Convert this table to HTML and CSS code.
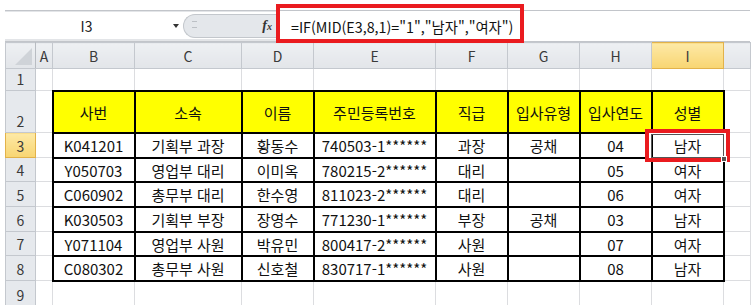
FILE: index.html
```html
<!DOCTYPE html>
<html lang="ko">
<head>
<meta charset="utf-8">
<title>Excel - MID 함수</title>
<link rel="stylesheet" href="styles.css">
</head>
<body>
<div class="app">
  <div class="fbar">
    <div class="namebox"><span class="name">I3</span><span class="dd"></span></div>
    <div class="pill"><span class="grip"></span><span class="fx">f<span class="fxx">x</span></span></div>
    <div class="formula">=IF(MID(E3,8,1)="1","남자","여자")</div>
  </div>
  <table class="sheet">
    <colgroup>
      <col class="c-rh"><col class="c-a"><col class="c-b"><col class="c-c"><col class="c-d"><col class="c-e"><col class="c-f"><col class="c-g"><col class="c-h"><col class="c-i"><col class="c-j">
    </colgroup>
    <tr class="r-hd">
      <th class="corner"><span class="tri"></span></th>
      <th class="ch">A</th><th class="ch">B</th><th class="ch">C</th><th class="ch">D</th><th class="ch">E</th><th class="ch">F</th><th class="ch">G</th><th class="ch">H</th><th class="ch ch-on">I</th><th class="ch"></th>
    </tr>
    <tr class="r-1">
      <th class="rh">1</th><td></td><td></td><td></td><td></td><td></td><td></td><td></td><td></td><td></td><td></td>
    </tr>
    <tr class="r-2">
      <th class="rh">2</th><td></td>
      <td class="t th-y">사번</td><td class="t th-y">소속</td><td class="t th-y">이름</td><td class="t th-y">주민등록번호</td><td class="t th-y">직급</td><td class="t th-y">입사유형</td><td class="t th-y">입사연도</td><td class="t th-y">성별</td><td></td>
    </tr>
    <tr class="r-d25">
      <th class="rh rh-on">3</th><td></td>
      <td class="t">K041201</td><td class="t">기획부 과장</td><td class="t">황동수</td><td class="t">740503-1******</td><td class="t">과장</td><td class="t">공채</td><td class="t">04</td><td class="t">남자</td><td></td>
    </tr>
    <tr class="r-d24">
      <th class="rh">4</th><td></td>
      <td class="t">Y050703</td><td class="t">영업부 대리</td><td class="t">이미옥</td><td class="t">780215-2******</td><td class="t">대리</td><td class="t"></td><td class="t">05</td><td class="t">여자</td><td></td>
    </tr>
    <tr class="r-d25">
      <th class="rh">5</th><td></td>
      <td class="t">C060902</td><td class="t">총무부 대리</td><td class="t">한수영</td><td class="t">811023-2******</td><td class="t">대리</td><td class="t"></td><td class="t">06</td><td class="t">여자</td><td></td>
    </tr>
    <tr class="r-d25">
      <th class="rh">6</th><td></td>
      <td class="t">K030503</td><td class="t">기획부 부장</td><td class="t">장영수</td><td class="t">771230-1******</td><td class="t">부장</td><td class="t">공채</td><td class="t">03</td><td class="t">남자</td><td></td>
    </tr>
    <tr class="r-d24">
      <th class="rh">7</th><td></td>
      <td class="t">Y071104</td><td class="t">영업부 사원</td><td class="t">박유민</td><td class="t">800417-2******</td><td class="t">사원</td><td class="t"></td><td class="t">07</td><td class="t">여자</td><td></td>
    </tr>
    <tr class="r-d25">
      <th class="rh">8</th><td></td>
      <td class="t">C080302</td><td class="t">총무부 사원</td><td class="t">신호철</td><td class="t">830717-1******</td><td class="t">사원</td><td class="t"></td><td class="t">08</td><td class="t">남자</td><td></td>
    </tr>
    <tr class="r-9">
      <th class="rh">9</th><td></td><td></td><td></td><td></td><td></td><td></td><td></td><td></td><td></td><td></td>
    </tr>
  </table>
  <div class="annot annot-formula"></div>
  <div class="annot annot-cell"><div class="sel"><span class="handle"></span></div></div>
</div>
</body>
</html>
```
FILE: styles.css
```css
html, body {
  margin: 0;
  background: #fff;
}
body {
  width: 754px;
  height: 305px;
  overflow: hidden;
  font-family: "Noto Sans CJK KR", "Noto Sans", sans-serif;
  color: #111;
}
.app {
  position: relative;
  padding: 10px 4px 0 5px;
}

/* formula bar */
.fbar {
  display: flex;
  align-items: center;
  height: 32px;
  box-sizing: border-box;
  border-top: 1px solid #c2c5ca;
  border-bottom: 1px solid #c2c5ca;
  box-shadow: inset 0 1px 0 #e3e5e8, inset 0 -2px 0 #e3e5e8;
  background: #fff;
}
.namebox {
  display: flex;
  align-items: center;
  width: 178px;
  height: 100%;
}
.name {
  width: 163px;
  text-align: center;
  font-size: 14px;
  color: #222;
}
.dd {
  width: 0;
  height: 0;
  border-left: 3.5px solid transparent;
  border-right: 3.5px solid transparent;
  border-top: 4px solid #333;
  margin-left: 5px;
}
.pill {
  display: flex;
  align-items: center;
  justify-content: space-between;
  box-sizing: border-box;
  width: 93px;
  height: 24px;
  padding: 0 4px 0 8px;
  background: #e4e7eb;
  border: 1px solid #c3c7cc;
  border-right: none;
  border-radius: 12px 0 0 12px;
}
.grip {
  width: 5px;
  height: 7px;
  border-top: 1px solid #b3b7bc;
  border-bottom: 1px solid #b3b7bc;
  box-sizing: border-box;
  margin-top: -3px;
  opacity: .8;
}
.fx {
  font-family: "Liberation Serif", serif;
  font-style: italic;
  font-weight: bold;
  font-size: 14px;
  color: #333;
}
.fxx {
  font-size: 10px;
}
.formula {
  flex: 1;
  height: 100%;
  display: flex;
  align-items: center;
  padding-left: 15px;
  font-size: 14.3px;
  color: #111;
  background: #fff;
}

/* sheet */
.sheet {
  border-collapse: collapse;
  table-layout: fixed;
  width: 745px;
}
.c-rh { width: 30px; }
.c-a { width: 17px; }
.c-b { width: 82px; }
.c-c { width: 107px; }
.c-d { width: 72px; }
.c-e { width: 122px; }
.c-f { width: 72px; }
.c-g { width: 72px; }
.c-h { width: 72px; }
.c-i { width: 72px; }
.c-j { width: 27px; }

.sheet td, .sheet th {
  padding: 0;
  border: 1px solid #dcdde0;
  text-align: center;
  font-weight: normal;
  white-space: nowrap;
  overflow: hidden;
}
.r-hd { height: 26px; }
.r-1 { height: 22px; }
.r-2 { height: 42px; }
.r-d25 { height: 25px; }
.r-d24 { height: 24px; }
.r-9 { height: 26px; }

.ch, .corner, .rh {
  background: linear-gradient(#eef0f3, #e2e5e9);
  border: 1px solid #c4c8ce !important;
  color: #3a3a3a;
  font-size: 14px;
}
.corner {
  position: relative;
  border-right-color: #b8bcc2 !important;
}
.tri {
  position: absolute;
  right: 3px;
  bottom: 3px;
  width: 0;
  height: 0;
  border-left: 17px solid transparent;
  border-bottom: 17px solid #cfd3d8;
}
.rh {
  vertical-align: bottom;
  padding-bottom: 1px !important;
  background: #e6e9ed;
}
.ch-on, .rh-on {
  background: linear-gradient(#fde9a6, #f8d572);
  border-color: #e2b24a !important;
}

.t {
  border: 2px solid #000 !important;
  font-size: 15px;
  color: #111;
  padding-top: 1px !important;
}
.th-y {
  background: #ffff00;
}

/* annotations */
.annot {
  position: absolute;
  box-sizing: border-box;
  border: 4px solid #ea1b1f;
}
.annot-formula {
  left: 276px;
  top: 4px;
  width: 248px;
  height: 39px;
}
.annot-cell {
  left: 645px;
  top: 129px;
  width: 85px;
  height: 33px;
}
.sel {
  position: absolute;
  left: 0;
  top: 0;
  right: 0;
  bottom: 0;
  border-style: solid;
  border-color: #fff;
  border-width: 1px 2px 0 2px;
}
.sel::after {
  content: "";
  position: absolute;
  left: 0;
  top: 0;
  right: 0;
  bottom: 0;
  border: 1px solid #555;
}
.handle {
  position: absolute;
  right: -3px;
  bottom: -4px;
  width: 4px;
  height: 4px;
  background: #555;
  border: 1px solid #fff;
  z-index: 1;
}
```
